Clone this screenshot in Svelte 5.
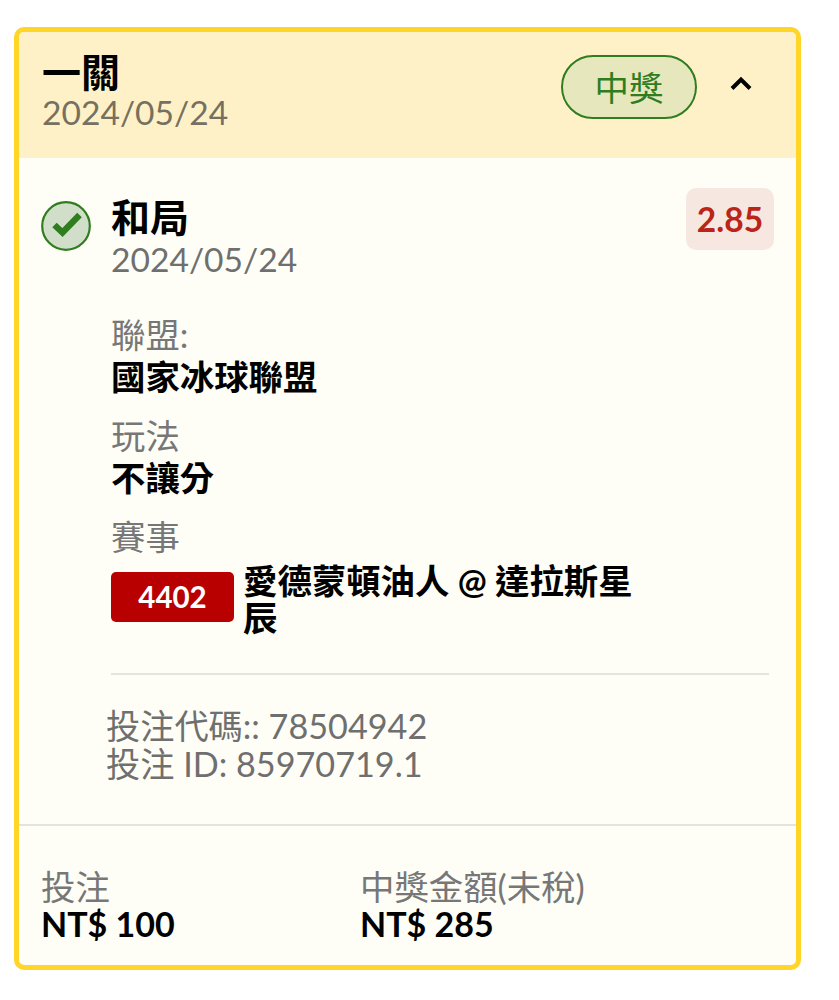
<script>
  const sections = [
    { label: '聯盟:', value: '國家冰球聯盟' },
    { label: '玩法', value: '不讓分' }
  ];
</script>

<div class="page">
  <div class="card">
    <header class="head">
      <div class="head-text">
        <div class="title">一關</div>
        <div class="date brown">2024/05/24</div>
      </div>
      <span class="pill">中獎</span>
      <svg class="chev" width="24" height="16" viewBox="0 0 24 16"><path d="M3 13.5 L12 4.5 L21 13.5" fill="none" stroke="#000" stroke-width="4"/></svg>
    </header>

    <section class="body">
      <div class="sel">
        <svg class="check" width="50" height="50" viewBox="0 0 50 50">
          <circle cx="25" cy="25" r="23.8" fill="#d1dfca" stroke="#2f7d1f" stroke-width="2.2"/>
          <path d="M13.5 24 L21.5 31.5 L38.5 14" fill="none" stroke="#2f7d1f" stroke-width="6.4"/>
        </svg>
        <div class="sel-text">
          <div class="title">和局</div>
          <div class="date">2024/05/24</div>
        </div>
        <span class="odds">2.85</span>
      </div>

      <div class="details">
        {#each sections as s}
          <div class="block">
            <div class="label">{s.label}</div>
            <div class="value">{s.value}</div>
          </div>
        {/each}
        <div class="block">
          <div class="label">賽事</div>
          <div class="match">
            <span class="code">4402</span>
            <span class="match-name">愛德蒙頓油人 @ 達拉斯星辰</span>
          </div>
        </div>
        <div class="rule"></div>
        <div class="ids">
          <div>投注代碼:: 78504942</div>
          <div>投注 ID: 85970719.1</div>
        </div>
      </div>
    </section>

    <footer class="foot">
      <div class="cell">
        <div class="label">投注</div>
        <div class="amount">NT$ 100</div>
      </div>
      <div class="cell">
        <div class="label">中獎金額(未稅)</div>
        <div class="amount">NT$ 285</div>
      </div>
    </footer>
  </div>
</div>

<style>
  :global(body) {
    margin: 0;
    background: #fff;
    font-family: Lato, "Noto Sans CJK TC", sans-serif;
  }
  .page {
    padding: 27px 38px 31px 14px;
  }
  .card {
    border: 5px solid #ffd527;
    border-radius: 10px;
    background: #fefef6;
    overflow: hidden;
  }
  .head {
    box-sizing: border-box;
    display: flex;
    align-items: flex-start;
    height: 126px;
    padding: 20px 43px 0 23px;
    background: #fff1c7;
  }
  .head-text { flex: 1; }
  .title {
    font-size: 39px;
    font-weight: 700;
    line-height: 43px;
    color: #000;
  }
  .head .title { line-height: 40px; }
  .date {
    font-size: 33.6px;
    line-height: 40px;
    color: #6f6f6f;
  }
  .brown { color: #75705f; }
  .pill {
    box-sizing: border-box;
    width: 136px;
    height: 64px;
    margin: 3px 32px 0 0;
    border: 2px solid #2f7d1f;
    border-radius: 32px;
    background: #e6e7bd;
    color: #2f7d1f;
    font-size: 34.4px;
    line-height: 61px;
    text-align: center;
  }
  .chev { flex: none; margin-top: 23px; }
  .body { padding: 30px 22px 0; }
  .sel { display: flex; align-items: flex-start; }
  .check { margin: 13px 20px 0 0; flex: none; }
  .sel-text { flex: 1; margin-top: 8px; }
  .odds {
    box-sizing: border-box;
    width: 88px;
    height: 62px;
    border-radius: 10px;
    background: #f6e8e1;
    color: #bb2418;
    font-size: 33.6px;
    font-weight: 700;
    line-height: 62px;
    text-align: center;
  }
  .details { padding: 37px 5px 0 70px; }
  .block { margin-bottom: 21px; }
  .label {
    font-size: 34.4px;
    line-height: 38px;
    color: #777;
  }
  .value {
    margin-top: 4px;
    font-size: 34.4px;
    font-weight: 700;
    line-height: 38px;
    color: #000;
  }
  .match { display: flex; align-items: flex-start; margin-top: 6px; }
  .code {
    flex: none;
    width: 123px;
    height: 50px;
    margin: 10px 9px 0 0;
    border-radius: 5px;
    background: #b90000;
    color: #fff;
    font-size: 29.5px;
    font-weight: 700;
    line-height: 50px;
    text-align: center;
  }
  .match-name {
    width: 395px;
    font-size: 34.4px;
    font-weight: 700;
    line-height: 37px;
    color: #000;
  }
  .rule { height: 2px; margin-top: 37px; background: #e4e4dc; }
  .ids {
    margin: 32px 0 0 -5px;
    font-size: 34.2px;
    line-height: 38px;
    color: #6f6f6f;
  }
  .foot {
    display: flex;
    margin-top: 41px;
    padding: 42px 22px 23px;
    border-top: 2px solid #e4e4dc;
  }
  .cell { width: 319px; }
  .amount {
    font-size: 34px;
    font-weight: 700;
    line-height: 36px;
    color: #000;
  }
</style>
